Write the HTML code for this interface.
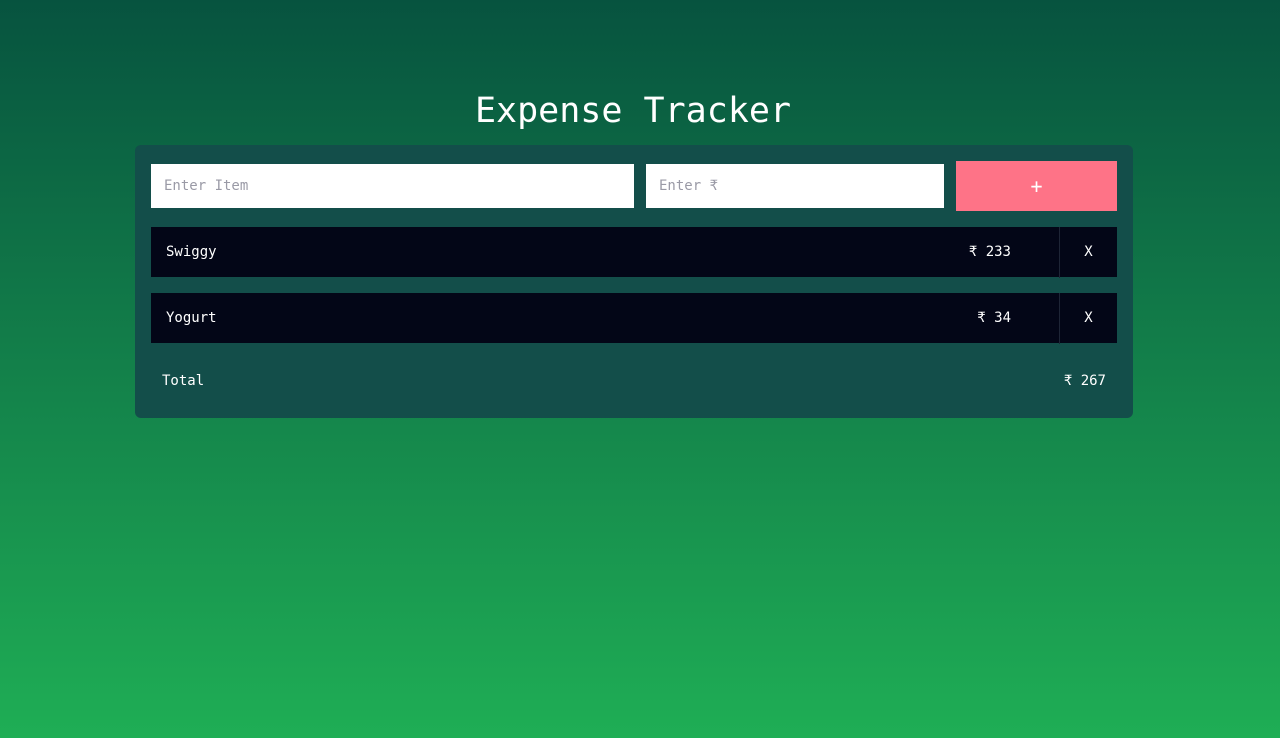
<!DOCTYPE html>
<html><head><style>
*{margin:0;padding:0;box-sizing:border-box}
body{width:1280px;height:738px;overflow:hidden;background:linear-gradient(#07533f,#1fae55);font-family:"DejaVu Sans Mono","Liberation Mono",monospace;color:#fff;position:relative}
h1{position:absolute;top:89px;left:-7px;width:1280px;text-align:center;font-weight:normal;font-size:35px;line-height:44px}
.card{position:absolute;left:135px;top:145px;width:998px;height:273px;background:#134e4a;border-radius:6px}
.abs{position:absolute}
.in{background:#fff;color:#9a9aa6;font-size:14px;line-height:45px;padding-left:13px}
.btn{background:#fe7387;font-size:20px;text-align:center;line-height:51px}
.row{background:#030617;font-size:14px;line-height:51px}
.x{border-left:1px solid #1e2536;text-align:center}
</style></head><body>
<h1>Expense Tracker</h1>
<div class="card">
<div class="abs in" style="left:16px;top:19px;width:483px;height:44px">Enter Item</div>
<div class="abs in" style="left:511px;top:19px;width:298px;height:44px">Enter ₹</div>
<div class="abs btn" style="left:821px;top:16px;width:161px;height:50px">+</div>
<div class="abs row" style="left:16px;top:82px;width:966px;height:50px">
 <span class="abs" style="left:15px">Swiggy</span>
 <span class="abs" style="right:106px">₹ 233</span>
 <span class="abs x" style="left:908px;width:58px">X</span></div>
<div class="abs row" style="left:16px;top:148px;width:966px;height:50px">
 <span class="abs" style="left:15px">Yogurt</span>
 <span class="abs" style="right:106px">₹ 34</span>
 <span class="abs x" style="left:908px;width:58px">X</span></div>
<div class="abs" style="left:27px;top:228px;font-size:14px">Total</div>
<div class="abs" style="right:27px;top:228px;font-size:14px">₹ 267</div>
</div>
</body></html>
